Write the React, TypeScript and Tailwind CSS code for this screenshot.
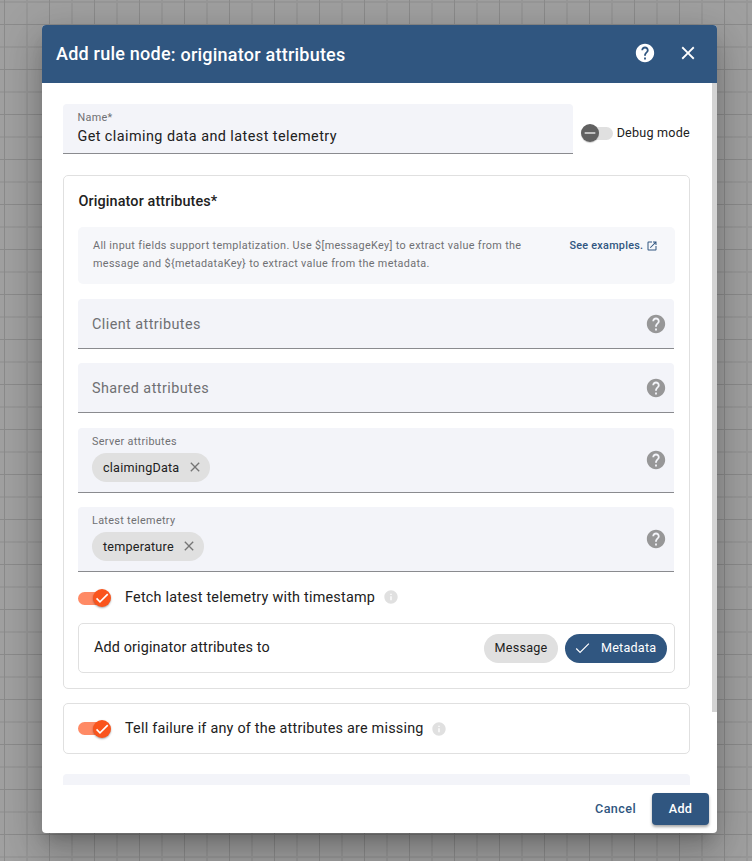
import React from "react";
import { MdClose, MdHelp, MdInfo, MdOpenInNew } from "react-icons/md";

function Toggle() {
  return (
    <span className="relative flex h-[18px] w-[33px] shrink-0 items-center">
      <span className="h-[13px] w-[32px] rounded-full bg-[#ff8a65]" />
      <span className="absolute top-0 right-[0.5px] flex h-[18px] w-[18px] items-center justify-center rounded-full bg-[#fa541c] shadow-[0_1px_2px_rgba(0,0,0,0.35)]">
        <svg viewBox="0 0 24 24" className="h-[16px] w-[16px] fill-white">
          <path d="M19.69,5.23L8.96,15.96l-4.23-4.23L2.96,13.5l6,6L21.46,7L19.69,5.23z" />
        </svg>
      </span>
    </span>
  );
}

function EmptyField({ label, className }: { label: string; className: string }) {
  return (
    <div
      className={`flex h-[50px] items-center justify-between rounded-t-[4px] border-b border-[#8a8b8f] bg-[#f3f4f9] pr-[7px] pl-[14px] ${className}`}
    >
      <span className="pt-[2px] text-[14.4px] tracking-[0.43px] text-[#6f7073]">{label}</span>
      <MdHelp className="h-[22px] w-[22px] text-[#979798]" />
    </div>
  );
}

function ChipField({ label, chip, className }: { label: string; chip: string; className: string }) {
  return (
    <div
      className={`flex h-[65px] items-center justify-between rounded-t-[4px] border-b border-[#8a8b8f] bg-[#f3f4f9] pr-[7px] pl-[14px] ${className}`}
    >
      <div className="flex flex-col items-start self-start pt-[7px]">
        <span className="text-[10.8px] leading-[14px] tracking-[0.34px] text-[#6f7073]">{label}</span>
        <span className="mt-[4px] flex h-[29px] items-center rounded-full bg-[#e0e0e0] pr-[7px] pl-[11px]">
          <span className="pt-px text-[12.6px] tracking-[0.22px] text-[#212121]">{chip}</span>
          <MdClose className="mb-px ml-[7.5px] h-[16px] w-[16px] text-[#757575]" />
        </span>
      </div>
      <MdHelp className="h-[22px] w-[22px] text-[#979798]" />
    </div>
  );
}

export default function App() {
  return (
    <div className="flex h-[861px] w-[752px] items-start overflow-hidden bg-[#a0a0a0] bg-[linear-gradient(90deg,#8b8b8b_1px,transparent_1px),linear-gradient(#8b8b8b_1px,transparent_1px),linear-gradient(90deg,#979797_2px,transparent_2px),linear-gradient(#979797_2px,transparent_2px)] bg-[size:45px_45px] bg-[position:4px_24px,4px_24px,26px_1px,26px_1px] pt-[25px] pl-[42px] font-['Roboto',sans-serif]">
      <div className="flex h-[808px] w-[675px] flex-col overflow-hidden rounded-[4px] bg-white shadow-[0_10px_14px_-6px_rgba(0,0,0,0.2),0_22px_34px_3px_rgba(0,0,0,0.14),0_8px_41px_7px_rgba(0,0,0,0.12)]">
        <header className="flex h-[58px] shrink-0 items-center bg-[#305680] pr-[18.5px] pl-[14px] text-white">
          <h1 className="flex flex-1 text-[18px] leading-[24px] font-medium tracking-[0.23px] whitespace-pre">
            <span>Add rule node</span>
            <span className="mt-[1px]">: originator attributes</span>
          </h1>
          <MdHelp className="mb-[2px] h-[22px] w-[22px]" />
          <MdClose className="mb-[2px] ml-[21px] h-[22px] w-[22px]" />
        </header>

        <div className="flex h-[702px] shrink-0 overflow-hidden">
          <main className="w-[670px] pt-[21px] pr-[22px] pl-[21px]">
            <div className="flex items-start">
              <div className="h-[50px] w-[510px] rounded-t-[4px] border-b border-[#8a8b8f] bg-[#f3f4f9] pt-[7px] pl-[14.4px]">
                <div className="text-[10.8px] leading-[14px] tracking-[0.34px] text-[#6f7073]">Name*</div>
                <div className="mt-[2px] text-[14.4px] leading-[20px] tracking-[0.44px] text-[#212121]">
                  Get claiming data and latest telemetry
                </div>
              </div>
              <div className="flex pt-[20px] pl-[8px]">
                <span className="relative flex h-[18px] w-[32px] items-center justify-end">
                  <span className="h-[13px] w-[29px] rounded-full bg-[#e0e0e0]" />
                  <span className="absolute top-0 left-0 flex h-[18px] w-[18px] items-center justify-center rounded-full bg-[#616161] shadow-[0_1px_1px_rgba(0,0,0,0.2)]">
                    <svg viewBox="0 0 24 24" className="h-[16px] w-[16px] fill-[#e0e0e0]">
                      <path d="M20 13H4v-2h16v2z" />
                    </svg>
                  </span>
                </span>
                <span className="ml-[4px] text-[12.6px] leading-[18px] tracking-[0.22px] whitespace-nowrap text-[#212121]">
                  Debug mode
                </span>
              </div>
            </div>

            <section className="mt-[21px] h-[514px] rounded-[5px] border border-[#e0e0e0] pt-[16px] pr-[14px] pl-[14px]">
              <h2 className="pl-[0.5px] text-[14.4px] leading-[20px] font-medium tracking-[0.12px] text-[#212121]">
                Originator attributes*
              </h2>
              <div className="mt-[15px] flex h-[57px] w-[597px] rounded-[5px] bg-[#f6f7fa] pt-[10px] pl-[15px] text-[10.8px] leading-[18px] tracking-[0.35px] text-[#6f7073]">
                <p className="w-[476.5px] whitespace-nowrap">
                  All input fields support templatization. Use $[messageKey] to extract value from the
                  <br />
                  message and $&#123;metadataKey&#125; to extract value from the metadata.
                </p>
                <a className="flex h-[18px] items-center font-medium tracking-[0.26px] whitespace-nowrap text-[#305680]">
                  See examples.
                  <MdOpenInNew className="ml-[3px] h-[12px] w-[12px]" />
                </a>
              </div>
              <div className="w-[596px]">
                <EmptyField label="Client attributes" className="mt-[15px]" />
                <EmptyField label="Shared attributes" className="mt-[14px]" />
                <ChipField label="Server attributes" chip="claimingData" className="mt-[15px]" />
                <ChipField label="Latest telemetry" chip="temperature" className="mt-[14px]" />
              </div>
              <div className="mt-[17px] flex h-[18px] items-center">
                <Toggle />
                <span className="ml-[14px] text-[14.4px] leading-[18px] tracking-[0.22px] text-[#212121]">
                  Fetch latest telemetry with timestamp
                </span>
                <MdInfo className="mb-[2px] ml-[7.5px] h-[16px] w-[16px] text-[#e0e0e0]" />
              </div>
              <div className="mt-[16px] flex h-[50px] w-[597px] items-center rounded-[5px] border border-[#e0e0e0] pr-[7px] pl-[15px]">
                <span className="flex-1 text-[14.4px] tracking-[0.13px] text-[#212121]">Add originator attributes to</span>
                <span className="flex h-[29px] w-[74px] items-center justify-center rounded-full bg-[#e0e0e0] text-[12.6px] tracking-[0.22px] text-[#212121]">
                  Message
                </span>
                <span className="ml-[7px] flex h-[29px] w-[102px] items-center rounded-full bg-[#305680] pl-[9px] text-[12.6px] tracking-[0.22px] text-white">
                  <svg viewBox="-2 -3 30 30" className="mr-[9px] h-[18px] w-[18px] fill-none stroke-white stroke-2">
                    <path d="M1.73,12.91 8.1,19.28 22.79,4.59" />
                  </svg>
                  Metadata
                </span>
              </div>
            </section>

            <section className="mt-[14px] flex h-[51px] items-center rounded-[5px] border border-[#e0e0e0] pl-[14px]">
              <Toggle />
              <span className="ml-[14px] text-[14.4px] leading-[18px] tracking-[0.22px] text-[#212121]">
                Tell failure if any of the attributes are missing
              </span>
              <MdInfo className="ml-[7px] h-[16px] w-[16px] text-[#e0e0e0]" />
            </section>
            <div className="mt-[20px] h-[50px] rounded-t-[4px] bg-[#f3f4f9]" />
          </main>
          <div className="h-[629px] w-[5px] bg-[#d3d3d3]" />
        </div>

        <footer className="flex h-[48px] items-start justify-end pt-[8px] pr-[8px] text-[12.6px] font-medium">
          <button className="h-[32px] px-[16px] tracking-[0.4px] text-[#305680]">Cancel</button>
          <button className="h-[32px] w-[57px] rounded-[4px] bg-[#305680] tracking-[0.4px] text-white shadow-[0_2px_3px_rgba(0,0,0,0.35)]">
            Add
          </button>
        </footer>
      </div>
    </div>
  );
}
